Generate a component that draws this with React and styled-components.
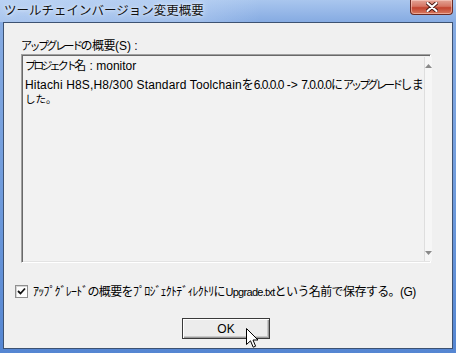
import React from 'react'
import styled, { createGlobalStyle } from 'styled-components'

const GlobalStyle = createGlobalStyle`
  html, body {
    margin: 0;
    padding: 0;
    width: 456px;
    height: 353px;
    overflow: hidden;
    background: #6f9ad8;
  }
`

const Window = styled.div`
  position: relative;
  width: 456px;
  height: 353px;
  box-sizing: border-box;
  display: flex;
  flex-direction: column;
  background: linear-gradient(to bottom, #a9c6ee 0, #86abe2 22px, #6f9bdc 55%, #5586d2 100%);
  font-family: "Liberation Sans", "Noto Sans CJK JP", sans-serif;
  font-size: 12px;
  color: #000;
`

// Japanese runs (kanji / hiragana)
const Jp = styled.span`
  font-family: "Noto Sans CJK JP", sans-serif;
  letter-spacing: ${(p) => p.$ls || '0'};
  font-size: ${(p) => p.$size || '12px'};
`

// katakana in MS UI Gothic is proportional and narrow
const Kana = styled.span`
  font-family: "Noto Sans CJK JP", sans-serif;
  font-size: 11px;
  letter-spacing: ${(p) => p.$ls || '-2.5px'};
`

const Latin = styled.span`
  font-family: "Liberation Sans", sans-serif;
  letter-spacing: ${(p) => p.$ls || '0'};
  font-size: ${(p) => p.$size || '12px'};
`

const TitleBar = styled.div`
  height: 22px;
  display: flex;
  align-items: flex-start;
  padding-left: 4px;
  background: linear-gradient(to right, rgba(200, 220, 248, 0.55) 0, rgba(200, 220, 248, 0.35) 200px, rgba(255, 255, 255, 0) 260px);
`

const Title = styled.div`
  margin-top: 2px;
  font-family: "Noto Sans CJK JP", sans-serif;
  font-size: 12.5px;
  line-height: 16px;
  color: #111;
  text-shadow: 0 0 6px #e8f0fb, 0 0 3px #e8f0fb;
`

const CloseButton = styled.div`
  margin-left: auto;
  margin-right: 3px;
  width: 43px;
  height: 15px;
  box-sizing: border-box;
  display: flex;
  align-items: center;
  justify-content: center;
  border: 1px solid #6b2a22;
  border-top: none;
  border-radius: 0 0 4px 4px;
  background: linear-gradient(to bottom, #e3a496 0, #d57563 45%, #c2442f 55%, #d8795f 100%);
  box-shadow: inset 0 0 0 1px rgba(255, 220, 210, 0.5);
`

const Client = styled.div`
  flex: 1;
  margin: 0 3px 4px 3px;
  border: 1px solid #3d5272;
  background: #f0f0f0;
  display: flex;
  flex-direction: column;
  padding: 15px 21px 0 11px;
`

const Group = styled.div`
  margin-left: 6px;
  display: flex;
  flex-direction: column;
`

const Label = styled.div`
  line-height: 14px;
  height: 14px;
  white-space: nowrap;
`

const TextBox = styled.div`
  margin-top: 2px;
  height: 209px;
  box-sizing: border-box;
  display: flex;
  border-top: 1px solid #a0a0a0;
  border-left: 1px solid #a0a0a0;
  border-right: 1px solid #ffffff;
  border-bottom: 1px solid #ffffff;
  box-shadow: inset 1px 1px 0 #696969, inset -1px -1px 0 #e3e3e3;
  background: #f2f2f2;
  padding: 2px 1px 1px 2px;
`

const TextContent = styled.div`
  flex: 1;
  padding: 1px 1px;
  line-height: 13.5px;
  white-space: nowrap;
`

const Line = styled.div`
  height: ${(p) => p.$h || '13.5px'};
  line-height: ${(p) => p.$h || '13.5px'};
  margin-top: ${(p) => p.$gap || '0'};
`

const Scrollbar = styled.div`
  width: 16px;
  display: flex;
  flex-direction: column;
  justify-content: space-between;
  background: #f6f6f6;
  border-left: 1px solid #dedede;
`

const ArrowButton = styled.div`
  height: 17px;
  display: flex;
  align-items: center;
  justify-content: center;
`

const CheckRow = styled.label`
  margin-top: 22px;
  height: 13px;
  display: flex;
  align-items: center;
  gap: 5px;
  white-space: nowrap;
`

const CheckBox = styled.div`
  width: 13px;
  height: 13px;
  box-sizing: border-box;
  border: 1px solid #8f8f8f;
  background: #fdfdfd;
  box-shadow: inset 1px 1px 0 #d6d6d6;
  display: flex;
  align-items: center;
  justify-content: center;
`

const CheckText = styled.span`
  line-height: 14px;
`

const ButtonRow = styled.div`
  margin-top: 20px;
  padding-left: 167px;
  display: flex;
`

const Button = styled.button`
  width: 88px;
  height: 21px;
  box-sizing: border-box;
  padding: 0;
  border: 1px solid #3a3a3a;
  background: #ececec;
  box-shadow: inset 1px 1px 0 #ffffff, inset -1px -1px 0 #9a9a9a, inset -2px -2px 0 #c8c8c8;
  font-family: "Liberation Sans", "Noto Sans CJK JP", sans-serif;
  font-size: 12px;
  color: #000;
`

const Cursor = styled.svg`
  position: absolute;
  left: 246px;
  top: 328px;
`

const Triangle = ({ down }) => (
  <svg width="7" height="4" viewBox="0 0 7 4">
    <path d={down ? 'M0 0 H7 L3.5 4 Z' : 'M0 4 H7 L3.5 0 Z'} fill="#8a8a8a" />
  </svg>
)

export default function App() {
  return (
    <>
      <GlobalStyle />
      <Window>
        <TitleBar>
          <Title>ツールチェインバージョン変更概要</Title>
          <CloseButton>
            <svg width="12" height="10" viewBox="0 0 12 10">
              <path
                d="M1.5 1 L10.5 9 M10.5 1 L1.5 9"
                stroke="#4a1a14"
                strokeWidth="4"
                strokeLinecap="round"
              />
              <path
                d="M1.5 1 L10.5 9 M10.5 1 L1.5 9"
                stroke="#ffffff"
                strokeWidth="2.2"
                strokeLinecap="round"
              />
            </svg>
          </CloseButton>
        </TitleBar>
        <Client>
          <Group>
            <Label>
              <Kana>アップグレード</Kana>
              <Jp $ls="-0.5px">の概要</Jp>(S) :
            </Label>
            <TextBox>
              <TextContent>
                <Line>
                  <Kana $ls="-2.8px">プロジェクト</Kana>
                  <Jp>名</Jp> : monitor
                </Line>
                <Line $h="5px" />
                <Line>
                  <Latin $ls="0.15px">Hitachi H8S,H8/300 Standard Toolchain</Latin>
                  <Jp>を</Jp>
                  <Latin $ls="-1px">6.0.0.0</Latin> -&gt; <Latin $ls="-1px">7.0.0.0</Latin>
                  <Jp>に</Jp>
                  <Kana $ls="-2.8px">アップグレード</Kana>
                  <Jp $ls="-0.5px">しま</Jp>
                </Line>
                <Line $gap="2px">
                  <Jp $size="10.5px">した。</Jp>
                </Line>
              </TextContent>
              <Scrollbar>
                <ArrowButton>
                  <Triangle />
                </ArrowButton>
                <ArrowButton>
                  <Triangle down />
                </ArrowButton>
              </Scrollbar>
            </TextBox>
          </Group>
          <CheckRow>
            <CheckBox>
              <svg width="9" height="9" viewBox="0 0 9 9">
                <path d="M1 4 L3.5 6.5 L8 1.5" fill="none" stroke="#111" strokeWidth="1.8" />
              </svg>
            </CheckBox>
            <CheckText>
              <Jp $ls="-0.8px">ｱｯﾌﾟｸﾞﾚｰﾄﾞ</Jp>
              <Jp $ls="-0.6px">の概要を</Jp>
              <Jp $ls="-0.8px">ﾌﾟﾛｼﾞｪｸﾄﾃﾞｨﾚｸﾄﾘ</Jp>
              <Jp>に</Jp>
              <Latin $size="11px" $ls="-0.7px">Upgrade.txt</Latin>
              <Jp $ls="-0.6px">という名前で保存する。</Jp>
              <Latin $ls="-0.5px">(G)</Latin>
            </CheckText>
          </CheckRow>
          <ButtonRow>
            <Button>OK</Button>
          </ButtonRow>
        </Client>
        <Cursor width="13" height="21" viewBox="0 0 13 21">
          <path
            d="M0.5 0.5 L0.5 16.5 L4.5 12.8 L7.2 19.2 L9.6 18.2 L7 12 L12 12 Z"
            fill="#ffffff"
            stroke="#000000"
            strokeWidth="1"
            strokeLinejoin="round"
          />
        </Cursor>
      </Window>
    </>
  )
}
